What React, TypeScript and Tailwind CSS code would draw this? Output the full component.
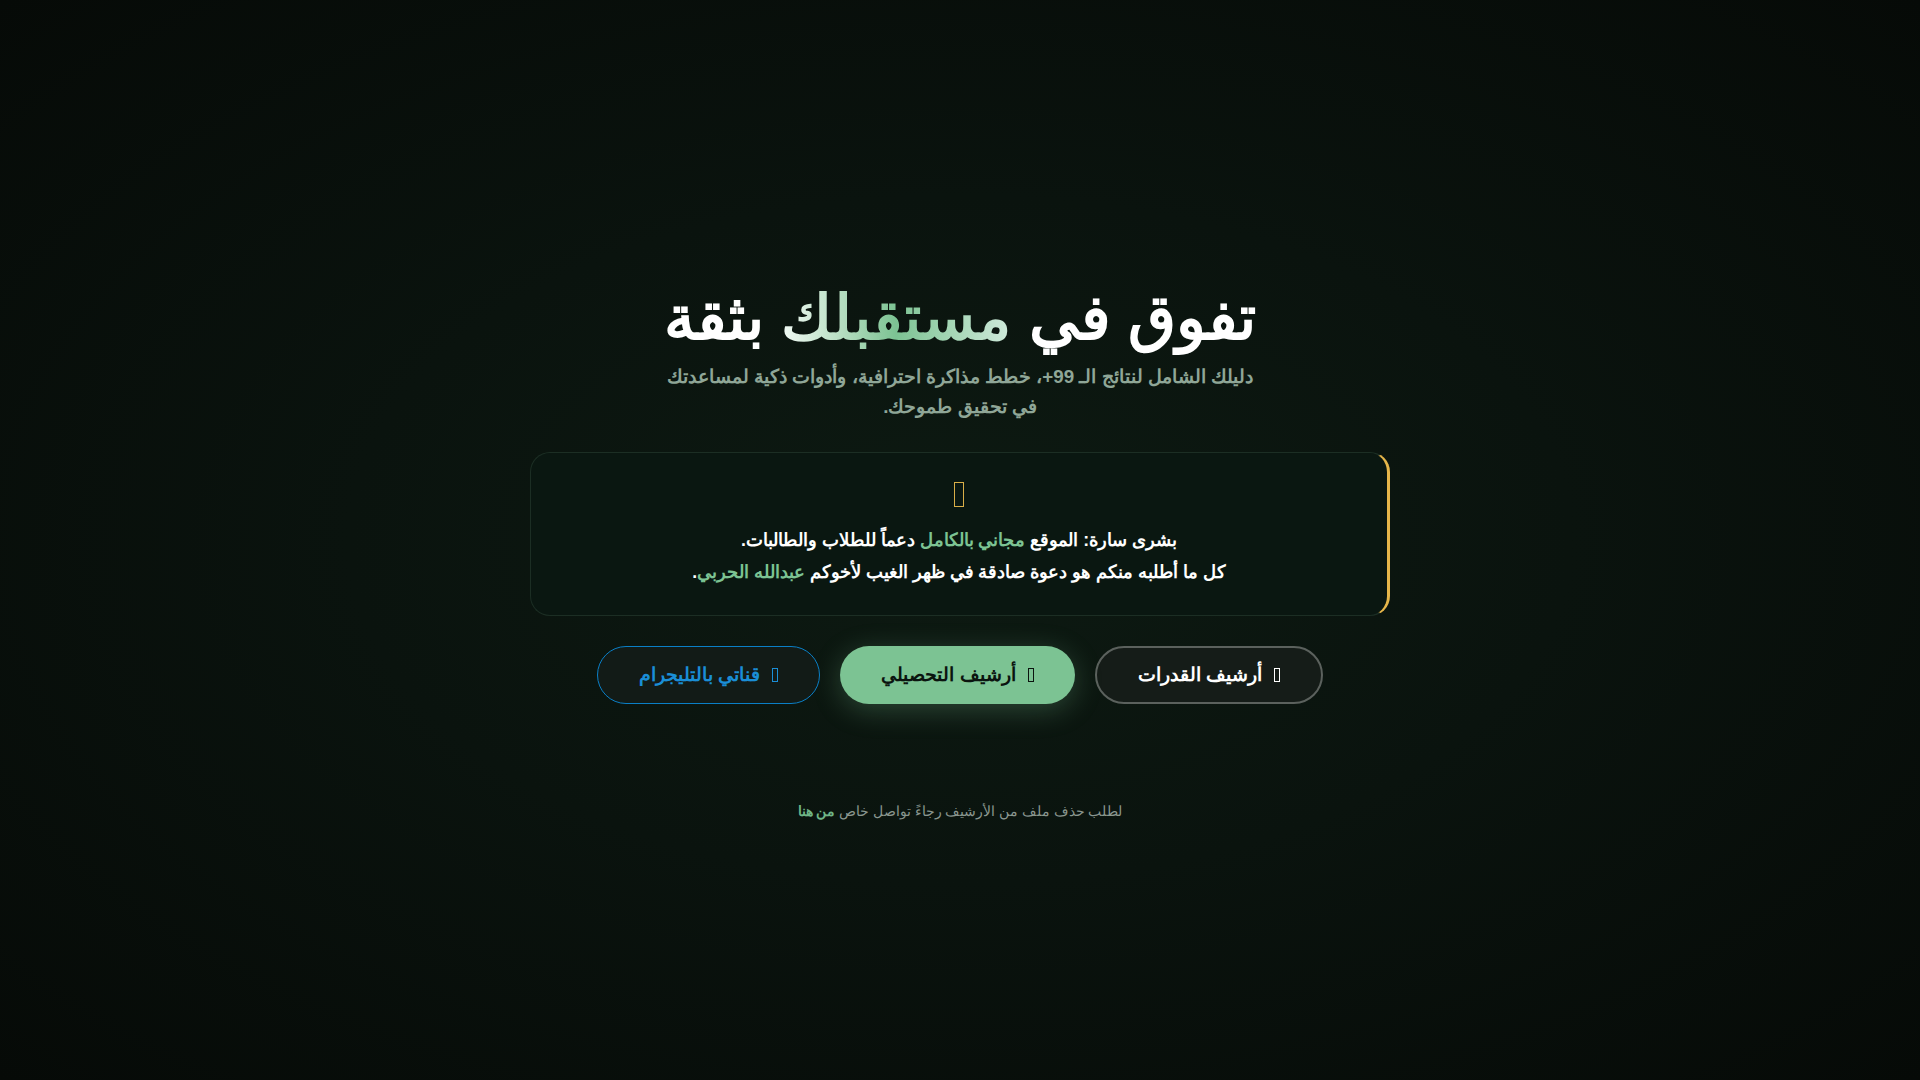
import React from 'react';

const Tofu = ({ className }: { className: string }) => (
  <span className={`inline-block border-[1.5px] border-current ${className}`} aria-hidden="true"></span>
);

export default function App() {
  return (
    <div
      dir="rtl"
      className="min-h-screen w-full pt-6 flex flex-col items-center justify-center bg-[radial-gradient(ellipse_at_center,#0d1a12_0%,#0a130e_45%,#060a07_100%)] text-white [font-family:'Liberation_Sans',sans-serif]"
    >
      {/* Hero */}
      <h1 className="text-[62px] font-bold leading-[1.15] text-white">
        تفوق في{' '}
        <span className="bg-gradient-to-l from-[#cfeadb] via-[#7cc393] to-[#f2faf5] bg-clip-text text-transparent">
          مستقبلك
        </span>{' '}
        بثقة
      </h1>
      <p className="mt-[9px] max-w-[610px] text-center text-[18.8px] font-semibold leading-[30px] text-[#8fa697]">
        دليلك الشامل لنتائج الـ 99+، خطط مذاكرة احترافية، وأدوات ذكية لمساعدتك في تحقيق طموحك.
      </p>

      {/* Notice card */}
      <div className="mt-[30px] w-[860px] rounded-[20px] border border-[#1c2e24] border-r-[3px] border-r-[#e6b64a] bg-[#0a1711] px-8 pt-[29px] pb-[27px] flex flex-col items-center">
        <Tofu className="w-[10px] h-[25px] text-[#d9ae48]" />
        <p className="mt-[17px] text-[17.6px] font-bold leading-[32px] text-center text-white">
          بشرى سارة: الموقع <span className="text-[#7cc393]">مجاني بالكامل</span> دعماً للطلاب والطالبات.
          <br />
          كل ما أطلبه منكم هو دعوة صادقة في ظهر الغيب لأخوكم <span className="text-[#7cc393]">عبدالله الحربي</span>.
        </p>
      </div>

      {/* Actions */}
      <div className="mt-[30px] flex items-center gap-5">
        <button className="h-[58px] px-[41px] rounded-full border-2 border-[#5b615d] bg-[#151c18] text-white text-[19.2px] font-bold flex items-center gap-3">
          <Tofu className="w-[6px] h-[14px] text-white" />
          أرشيف القدرات
        </button>
        <button className="h-[58px] px-[41px] rounded-full bg-[#7cc393] text-[#0b140f] text-[19.2px] font-bold flex items-center gap-3 shadow-[0_6px_28px_rgba(124,195,147,0.28)]">
          <Tofu className="w-[6px] h-[14px] text-[#0b140f]" />
          أرشيف التحصيلي
        </button>
        <button className="h-[58px] px-[41px] rounded-full border border-[#0a7fc6] bg-[#121b17] text-[#1a8ed6] text-[19.2px] font-bold flex items-center gap-3">
          <Tofu className="w-[6px] h-[14px] text-[#1a8ed6]" />
          قناتي بالتليجرام
        </button>
      </div>

      {/* Footer note */}
      <p className="mt-[98px] text-[13.5px] text-[#8a978f]">
        لطلب حذف ملف من الأرشيف رجاءً تواصل خاص <span className="font-bold text-[#6fb587]">من هنا</span>
      </p>
    </div>
  );
}
